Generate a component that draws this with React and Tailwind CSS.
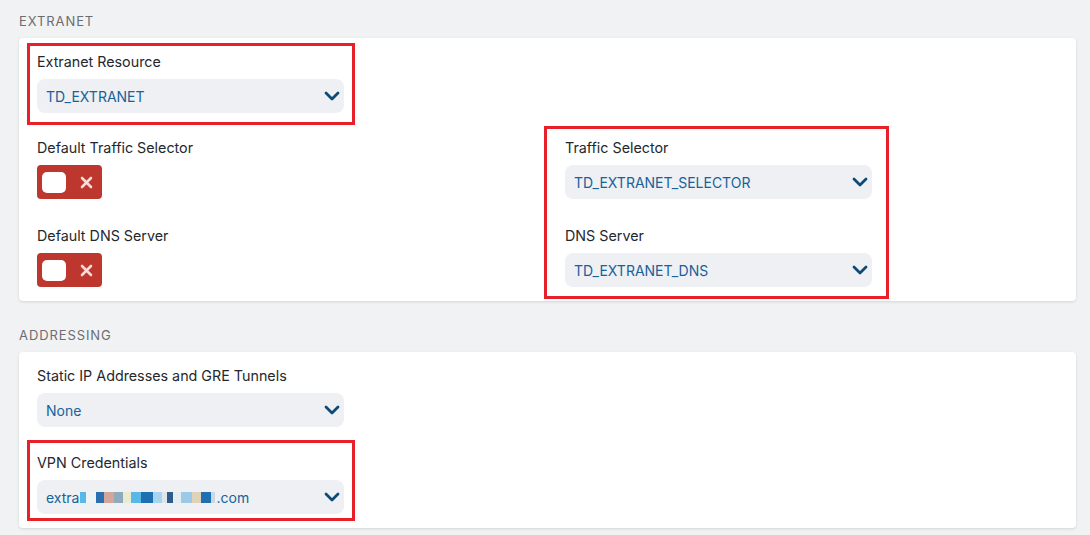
import { Fragment } from 'react';

const FONT = { fontFamily: 'Inter, "Noto Sans", Arial, sans-serif' };

function Chevron() {
  return (
    <svg width="16" height="10" viewBox="0 0 16 10" className="text-[#0c4a78]" fill="none">
      <polyline points="2,2 8,8 14,2" stroke="currentColor" strokeWidth="2.8" strokeLinecap="round" strokeLinejoin="round" />
    </svg>
  );
}

function SelectBox({ children }) {
  return (
    <div className="flex items-center justify-between w-[307px] h-[34px] pl-[9px] pr-[4px] rounded-lg bg-[#eef0f3]">
      <span className="flex items-center text-[14px] text-[#17629a]">{children}</span>
      <Chevron />
    </div>
  );
}

// Redacted account name, drawn as scrambled colour blocks
function Redacted() {
  const blocks = [
    ['#5ab8e8', 6], ['#eef3f6', 10], ['#2a6fae', 8], ['#d4a59a', 10], ['#8faabb', 9], ['#e9ecd0', 8],
    ['#5ab8e8', 10], ['#1f70b0', 12], ['#a8d4ee', 9], ['#dfe6ea', 5], ['#2f5d8a', 6], ['#e6ecef', 8],
    ['#9cc9e6', 11], ['#e0d2b8', 9], ['#1f70b0', 10], ['#c9d8e2', 4],
  ];
  return (
    <span className="inline-flex items-center h-[14px] ml-[1px] mr-[1px]">
      {blocks.map(([c, w], i) => (
        <Fragment key={i}>
          <span className="h-[11px]" style={{ background: c, width: w }} />
        </Fragment>
      ))}
    </span>
  );
}

function Field({ label, children }) {
  return (
    <div className="relative">
      <div className="text-[14.3px] leading-5 mb-[7px] text-[#24282d]">{label}</div>
      {children}
    </div>
  );
}

function Toggle() {
  return (
    <div className="flex items-center w-[65px] h-[34px] rounded bg-[#bd372f] pl-[5px]">
      <div className="w-[24px] h-[21px] rounded-[5px] bg-white" />
      <svg width="13" height="13" viewBox="0 0 13 13" className="ml-[14px] text-[#f8dcd9]">
        <path d="M2 2 L11 11 M11 2 L2 11" stroke="currentColor" strokeWidth="2.6" strokeLinecap="round" />
      </svg>
    </div>
  );
}

function Highlight({ className }) {
  return <div className={`absolute border-[3px] border-[#e8202a] pointer-events-none ${className}`} />;
}

function Section({ title, children }) {
  return (
    <div>
      <div className="text-[13px] leading-4 tracking-[0.07em] text-[#6b6d70] mb-[9px]">{title}</div>
      <div className="bg-white rounded shadow-[0_1px_3px_rgba(0,0,0,0.12)] pt-[14px] pb-[14px] px-[18px]">
        {children}
      </div>
    </div>
  );
}

export default function App() {
  return (
    <div className="min-h-[535px] bg-[#f1f2f4] pl-[19px] pr-[14px] pt-[13px] flex flex-col gap-[26px]" style={FONT}>
      <Section title="EXTRANET">
        <div className="flex flex-col gap-[25px]">
          <Field label="Extranet Resource">
            <SelectBox>TD_EXTRANET</SelectBox>
            <Highlight className="-left-[10px] w-[328px] -top-[9px] -bottom-[12px]" />
          </Field>
          <div className="grid grid-cols-[528px_1fr]">
            <div className="flex flex-col gap-[27px]">
              <Field label="Default Traffic Selector">
                <Toggle />
              </Field>
              <Field label="Default DNS Server">
                <Toggle />
              </Field>
            </div>
            <div className="relative flex flex-col gap-[27px]">
              <Field label="Traffic Selector">
                <SelectBox>TD_EXTRANET_SELECTOR</SelectBox>
              </Field>
              <Field label="DNS Server">
                <SelectBox>TD_EXTRANET_DNS</SelectBox>
              </Field>
              <Highlight className="-left-[21px] w-[345px] -top-[12px] -bottom-[12px]" />
            </div>
          </div>
        </div>
      </Section>

      <Section title="ADDRESSING">
        <div className="flex flex-col gap-[26px]">
          <Field label="Static IP Addresses and GRE Tunnels">
            <SelectBox>None</SelectBox>
          </Field>
          <Field label="VPN Credentials">
            <SelectBox>
              extra<Redacted />.com
            </SelectBox>
            <Highlight className="-left-[10px] w-[328px] -top-[13px] -bottom-[7px]" />
          </Field>
        </div>
      </Section>
    </div>
  );
}
